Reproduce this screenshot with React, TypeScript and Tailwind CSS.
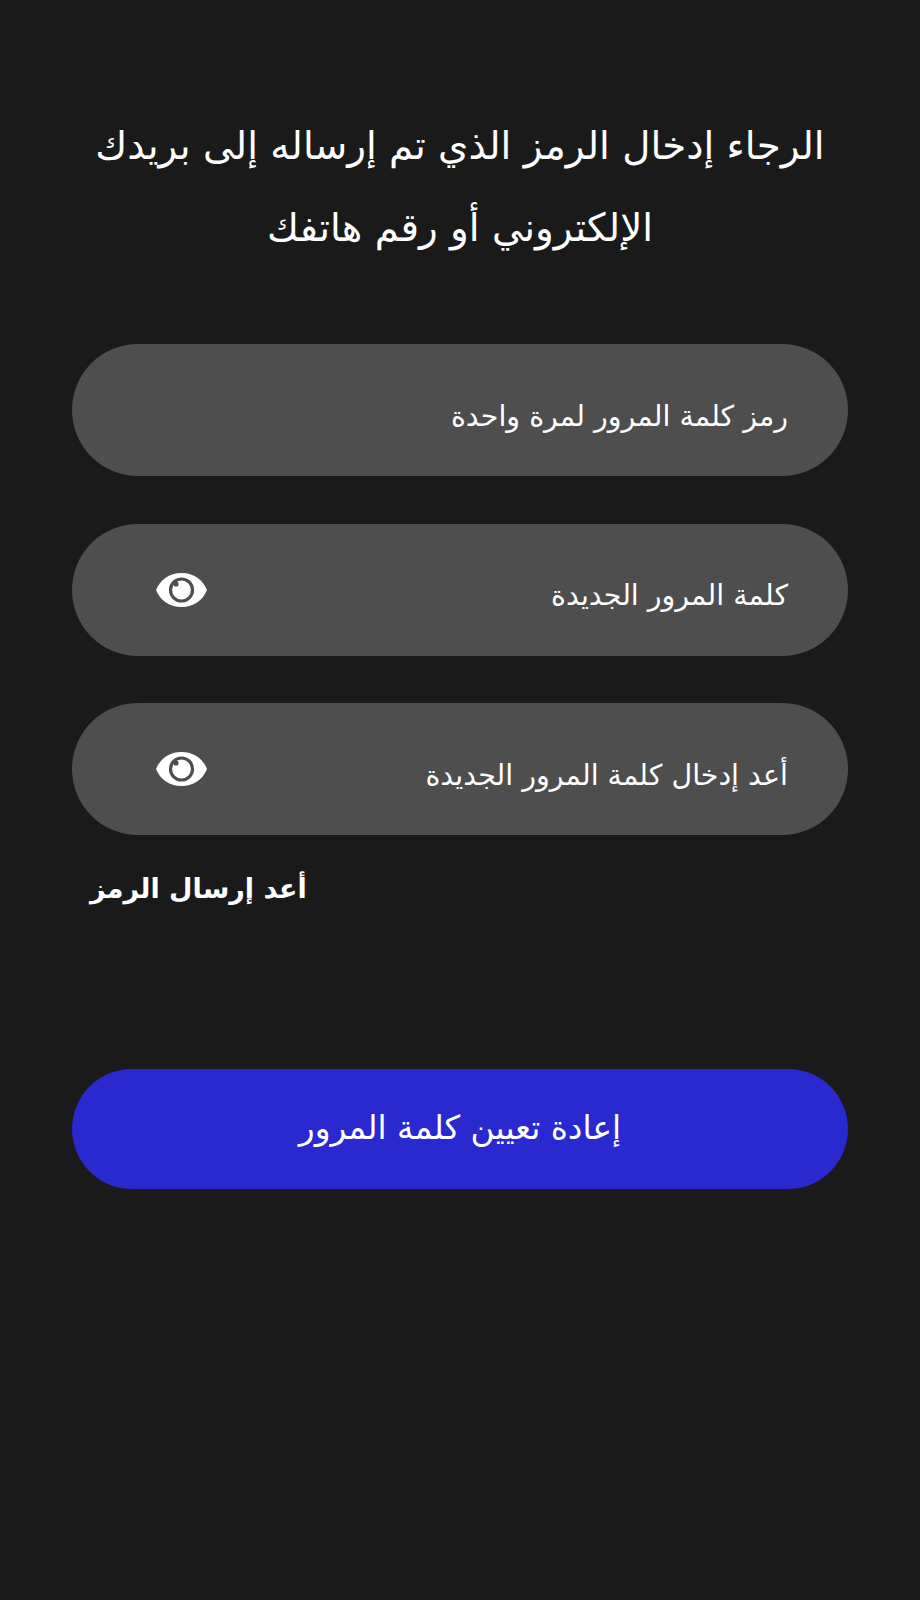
const arabic = { fontFamily: '"DejaVu Sans", "Noto Sans", "Liberation Sans", sans-serif' };

function EyeIcon() {
  return (
    <svg viewBox="0 0 51 34" className="h-[34px] w-[51px]" aria-hidden="true">
      <path fill="#ffffff" d="M0 17C4 7 13 0 25.5 0S47 7 51 17C47 27 38 34 25.5 34S4 27 0 17Z" />
      <circle cx="25.5" cy="17" r="11" fill="#ffffff" stroke="#4e4e4e" strokeWidth="3.2" />
      <circle cx="20" cy="11" r="2.6" fill="#4e4e4e" />
    </svg>
  );
}

function Field({ label, eye }: { label: string; eye?: boolean }) {
  return (
    <div className="flex h-[132px] w-[776px] items-center justify-between rounded-full bg-[#4e4e4e] pl-[84px] pr-[60px]">
      <span className="pt-[14px] text-[28.5px] text-white">{label}</span>
      {eye ? <EyeIcon /> : null}
    </div>
  );
}

export default function App() {
  return (
    <div dir="rtl" style={arabic} className="flex min-h-[1600px] flex-col items-center bg-[#1a1a1a] pt-[105px] text-white">
      <h1 className="w-[776px] text-center text-[38.8px] font-normal leading-[82px]">
        الرجاء إدخال الرمز الذي تم إرساله إلى بريدك الإلكتروني أو رقم هاتفك
      </h1>
      <div className="mt-[75px] flex flex-col gap-[47.5px]">
        <Field label="رمز كلمة المرور لمرة واحدة" />
        <Field label="كلمة المرور الجديدة" eye />
        <Field label="أعد إدخال كلمة المرور الجديدة" eye />
      </div>
      <div className="mt-[31px] w-[776px] pl-[18px] text-left text-[27px] font-bold leading-[46px]">أعد إرسال الرمز</div>
      <button className="mt-[157px] h-[120px] w-[776px] rounded-full bg-[#2a28cf] text-[32.8px] text-white">
        إعادة تعيين كلمة المرور
      </button>
    </div>
  );
}
